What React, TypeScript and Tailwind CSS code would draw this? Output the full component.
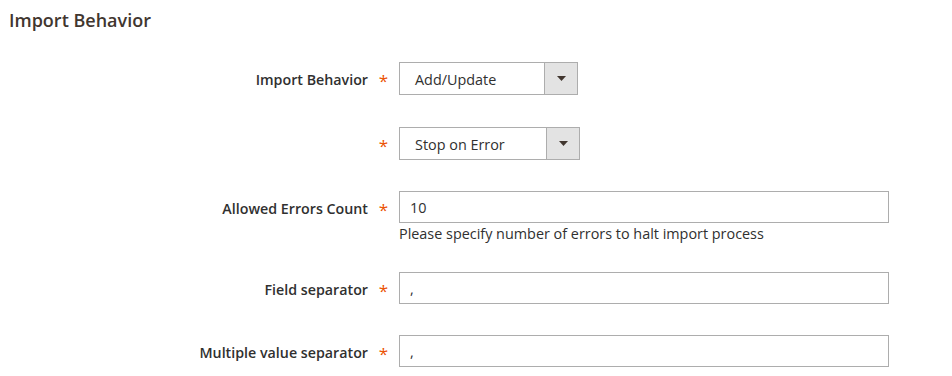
import { ReactNode } from "react";

const font = { fontFamily: '"Open Sans", "Liberation Sans", sans-serif' };

function Row({
  label,
  children,
  className = "",
}: {
  label?: string;
  children: ReactNode;
  className?: string;
}) {
  return (
    <div className={`flex items-start ${className}`}>
      <div className="w-[368px] shrink-0 h-[33px] pt-[2px] flex items-center justify-end text-[14.25px] font-semibold text-[#303030]">
        {label}
      </div>
      <div className="w-[31px] shrink-0 h-[33px] flex items-center justify-center text-[17px] text-[#eb5202] pt-[5px]">
        *
      </div>
      <div>{children}</div>
    </div>
  );
}

function Select({ value, width }: { value: string; width: string }) {
  return (
    <div className={`flex h-[33px] border border-[#adadad] bg-white ${width}`}>
      <div className="flex-1 flex items-center pl-[15px] pt-[2px] text-[14.4px] text-[#303030]">{value}</div>
      <div className="w-[33px] border-l border-[#adadad] bg-[#e3e3e3] flex items-center justify-center">
        <svg width="9" height="5" viewBox="0 0 9 5">
          <path d="M0 0h9L4.5 5z" fill="#41362f" />
        </svg>
      </div>
    </div>
  );
}

function TextInput({ value }: { value: string }) {
  return (
    <div className="w-[490px] h-[32px] border border-[#adadad] bg-white flex items-center pl-[10px] pt-[2px] text-[14.4px] text-[#303030]">
      {value}
    </div>
  );
}

export default function App() {
  return (
    <div className="w-[952px] h-[376px] bg-white overflow-hidden" style={font}>
      <h2 className="pl-[9px] pt-[7px] text-[18px] leading-[26px] font-semibold text-[#41362f]">
        Import Behavior
      </h2>
      <div className="flex flex-col">
        <Row label="Import Behavior" className="mt-[29px]">
          <Select value="Add/Update" width="w-[179px]" />
        </Row>
        <Row className="mt-[32px]">
          <Select value="Stop on Error" width="w-[181px]" />
        </Row>
        <Row label="Allowed Errors Count" className="mt-[31px]">
          <TextInput value="10" />
          <div className="text-[14.4px] leading-[20px] text-[#303030] mt-[1px]">
            Please specify number of errors to halt import process
          </div>
        </Row>
        <Row label="Field separator" className="mt-[28px]">
          <TextInput value="," />
        </Row>
        <Row label="Multiple value separator" className="mt-[30px]">
          <TextInput value="," />
        </Row>
      </div>
    </div>
  );
}
